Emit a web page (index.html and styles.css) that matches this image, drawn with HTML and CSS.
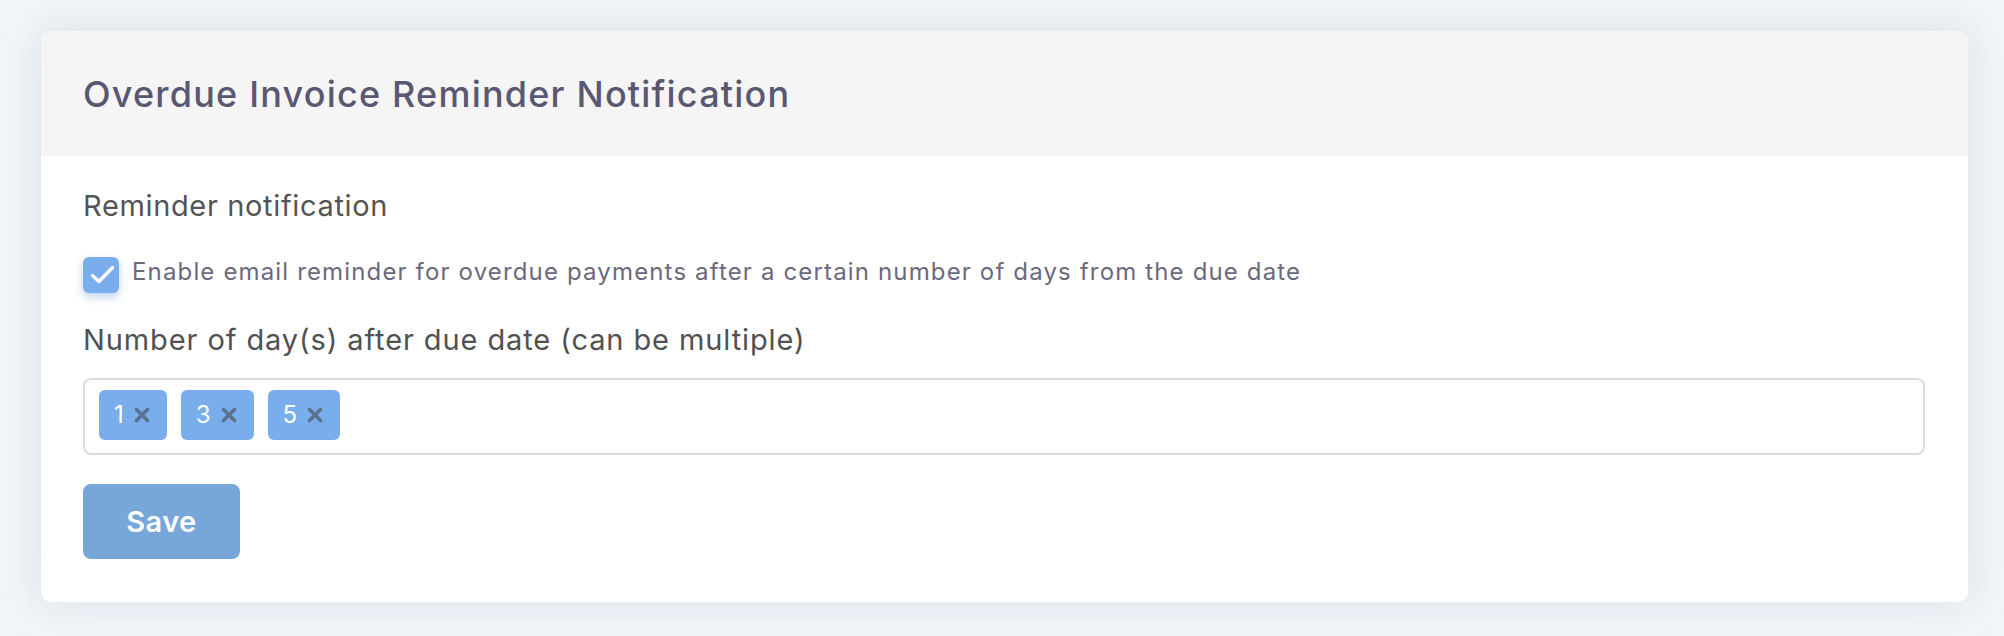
FILE: index.html
```html
<!DOCTYPE html>
<html lang="en">
<head>
<meta charset="utf-8">
<title>Overdue Invoice Reminder Notification</title>
<link rel="stylesheet" href="styles.css">
</head>
<body>
  <div class="card">
    <div class="card-header">
      <h1 class="card-title">Overdue Invoice Reminder Notification</h1>
    </div>
    <div class="card-body">
      <div class="section-label">Reminder notification</div>
      <label class="check-row">
        <span class="checkbox">
          <svg width="36" height="36" viewBox="0 0 36 36"><path d="M9.5 18.5 L16 24.5 L29.5 10.5" fill="none" stroke="#fff" stroke-width="3.4" stroke-linecap="round" stroke-linejoin="round"/></svg>
        </span>
        <span class="check-text">Enable email reminder for overdue payments after a certain number of days from the due date</span>
      </label>
      <div class="field-label">Number of day(s) after due date (can be multiple)</div>
      <div class="tag-input">
        <span class="tag"><span class="tag-num">1</span><svg class="tag-x" width="16" height="16" viewBox="0 0 16 16"><path d="M2.5 2.5 L13.5 13.5 M13.5 2.5 L2.5 13.5" stroke="#5b7190" stroke-width="3.6" stroke-linecap="round"/></svg></span>
        <span class="tag"><span class="tag-num">3</span><svg class="tag-x" width="16" height="16" viewBox="0 0 16 16"><path d="M2.5 2.5 L13.5 13.5 M13.5 2.5 L2.5 13.5" stroke="#5b7190" stroke-width="3.6" stroke-linecap="round"/></svg></span>
        <span class="tag"><span class="tag-num">5</span><svg class="tag-x" width="16" height="16" viewBox="0 0 16 16"><path d="M2.5 2.5 L13.5 13.5 M13.5 2.5 L2.5 13.5" stroke="#5b7190" stroke-width="3.6" stroke-linecap="round"/></svg></span>
      </div>
      <button class="save-btn" type="button">Save</button>
    </div>
  </div>
</body>
</html>
```
FILE: styles.css
```css
* { box-sizing: border-box; }

html, body {
  margin: 0;
  padding: 0;
}

body {
  background: #f1f5f8;
  padding: 31px 36px 34px 41px;
  font-family: Inter, "Open Sans", sans-serif;
}

.card {
  background: #ffffff;
  border-radius: 10px;
  box-shadow: 0 0 40px rgba(170, 188, 205, 0.35);
  overflow: hidden;
}

.card-header {
  background: #f5f5f5;
  height: 125px;
  padding: 0 42px;
  display: flex;
  align-items: center;
}

.card-title {
  margin: 0;
  font-size: 36px;
  font-weight: 500;
  color: #5a5773;
  line-height: 44px;
  letter-spacing: 1.2px;
}

.card-body {
  padding: 30px 43px 43px 42px;
  display: flex;
  flex-direction: column;
  align-items: flex-start;
}

.section-label {
  font-size: 29px;
  line-height: 40px;
  color: #545454;
  letter-spacing: 0.65px;
}

.check-row {
  margin-top: 31px;
  display: flex;
  align-items: center;
  gap: 13px;
}

.checkbox {
  width: 36px;
  height: 36px;
  border-radius: 6px;
  background: #7aadeb;
  box-shadow: 0 4px 9px rgba(110, 160, 225, 0.45);
  display: flex;
}

.check-text {
  font-size: 24px;
  line-height: 32px;
  color: #6b697d;
  margin-top: -6px;
  letter-spacing: 1.15px;
}

.field-label {
  margin-top: 27px;
  font-size: 29px;
  line-height: 40px;
  color: #515151;
  letter-spacing: 0.9px;
}

.tag-input {
  margin-top: 18px;
  align-self: stretch;
  height: 77px;
  border: 2px solid #dcdce0;
  border-radius: 8px;
  padding: 10px 14px 0;
  display: flex;
  align-items: flex-start;
  gap: 14px;
}

.tag {
  height: 50px;
  border-radius: 6px;
  background: #7aadeb;
  display: flex;
  align-items: center;
  gap: 10px;
  padding: 0 17px 0 15px;
}

.tag-num {
  color: #ffffff;
  font-size: 24px;
  line-height: 30px;
}

.tag-x {
  display: block;
}

.save-btn {
  margin-top: 29px;
  width: 157px;
  height: 75px;
  border: none;
  border-radius: 8px;
  background: #77a7d9;
  color: #ffffff;
  font-family: inherit;
  font-size: 29px;
  font-weight: 600;
  letter-spacing: 0.4px;
  padding: 0;
}
```
